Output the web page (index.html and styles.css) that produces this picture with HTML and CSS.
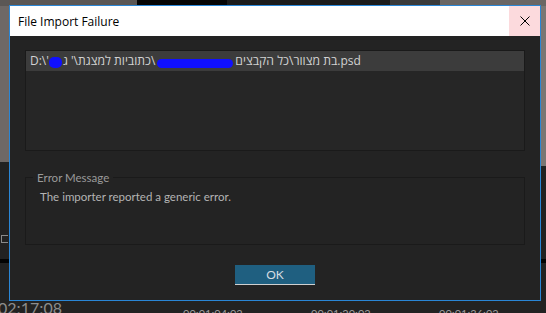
FILE: index.html
```html
<!DOCTYPE html>
<html lang="en">
<head>
  <meta charset="UTF-8" />
  <meta name="viewport" content="width=device-width, initial-scale=1.0"/>
  <title>File Import Failure</title>
  <link rel="stylesheet" href="styles.css">
</head>
<body>
  <div class="desktop">
    <!-- app behind the dialog -->
    <div class="backdrop-top">
      <div class="strip photo"></div>
      <div class="strip black"></div>
      <div class="strip dark"></div>
      <div class="strip grey"></div>
      <div class="strip photo2"></div>
    </div>
    <div class="backdrop-left"></div>
    <div class="backdrop-right"></div>
    <div class="band band-left"></div>
    <div class="band band-right"></div>
    <div class="side-icon"></div>
    <div class="backdrop-bottom">
      <span class="timecode">02;17;08</span>
      <span class="ruler">00;01;04;02</span>
      <span class="ruler">00;01;20;02</span>
      <span class="ruler">00;01;36;02</span>
    </div>

    <div class="dialog">
      <div class="titlebar">
        <span class="title">File Import Failure</span>
        <button class="close" aria-label="Close">
          <svg width="10" height="10" viewBox="0 0 10 10">
            <path d="M0.5 0.5 L9.5 9.5 M9.5 0.5 L0.5 9.5" stroke="#000" stroke-width="1" fill="none"/>
          </svg>
        </button>
      </div>
      <div class="dialog-body">
        <div class="file-list">
          <div class="file-row">
            <span>D:\'</span><span class="redact small"></span><span class="heb" dir="rtl">ג</span><span>&nbsp;'\</span><span class="heb" dir="rtl">כתוביות למצגת</span><span>\</span><span class="redact long"></span><span class="heb" dir="rtl">בת מצוור\כל הקבצים</span><span>.psd</span>
          </div>
        </div>
        <fieldset class="error-box">
          <legend>Error Message</legend>
          <div class="error-text">The importer reported a generic error.</div>
        </fieldset>
        <div class="actions">
          <button class="ok">OK</button>
        </div>
      </div>
    </div>
  </div>
</body>
</html>
```

FILE: styles.css
```css
* {
  box-sizing: border-box;
}
body, html {
  margin: 0;
  padding: 0;
  overflow: hidden;
  height: 100%;
  background: #1f1f1f;
  font-family: "Open Sans", "Noto Sans", sans-serif;
}
.desktop {
  position: relative;
  width: 546px;
  height: 313px;
  background: #222222;
}
.backdrop-top {
  display: flex;
  height: 6px;
}
.strip.photo { width: 137px; background: #5b5755; }
.strip.black { width: 90px; background: #050505; }
.strip.dark { width: 163px; background: #1b1b1b; }
.strip.grey { width: 50px; background: #3a3a3a; }
.strip.photo2 { flex: 1; background: #6a6664; }
.backdrop-left {
  position: absolute;
  left: 0;
  top: 6px;
  width: 9px;
  height: 156px;
  background: #6e6866;
}
.backdrop-right {
  position: absolute;
  right: 0;
  top: 6px;
  width: 5px;
  height: 160px;
  background: #7a7674;
}
.band {
  position: absolute;
  top: 259px;
  height: 4px;
  background: #030303;
}
.band-left { left: 0; width: 9px; }
.band-right { right: 0; width: 5px; }
.side-icon {
  position: absolute;
  left: 1px;
  top: 235px;
  width: 7px;
  height: 8px;
  border: 1px solid #8a8a8a;
  border-right: none;
}
.backdrop-bottom {
  position: absolute;
  left: 0;
  right: 0;
  top: 298px;
  height: 15px;
  display: flex;
  align-items: flex-start;
  color: #8c8c8c;
  font-family: "Lato", "Open Sans", sans-serif;
}
.timecode {
  flex-shrink: 0;
  font-size: 16px;
  line-height: 16px;
  margin-top: 2px;
  margin-left: -2px;
  width: 185px;
}
.ruler {
  flex-shrink: 0;
  font-size: 11px;
  line-height: 11px;
  margin-top: 10px;
  width: 128px;
  color: #9a9a9a;
}

.dialog {
  position: absolute;
  left: 9px;
  top: 5px;
  width: 532px;
  height: 296px;
  border: 1px solid #2a86d6;
  background: #232323;
  display: flex;
  flex-direction: column;
}
.titlebar {
  height: 30px;
  background: #ffffff;
  display: flex;
  align-items: center;
  justify-content: space-between;
}
.title {
  font-size: 12px;
  color: #000;
  padding-left: 8px;
}
.close {
  width: 31px;
  height: 30px;
  border: none;
  padding: 0;
  background: #fcdadd;
  display: flex;
  align-items: center;
  justify-content: center;
}
.dialog-body {
  flex: 1;
  padding: 14px 15px 0 15px;
}
.file-list {
  height: 101px;
  border: 1px solid #1a1a1a;
  background: #262626;
}
.file-row {
  height: 20px;
  background: #3c3c3c;
  color: #d2d2d2;
  font-size: 12px;
  line-height: 20px;
  padding-left: 4px;
  white-space: nowrap;
  display: flex;
  align-items: center;
}
.heb {
  font-size: 12.2px;
}
.redact {
  display: inline-block;
  background: #1010ff;
  height: 11px;
  border-radius: 5px;
}
.redact.small { width: 13px; margin: 3px 1px 0 0; }
.redact.long { width: 76px; height: 9px; margin: 4px 2px 0 2px; }
.error-box {
  margin: 20px 0 0 0;
  padding: 0 0 0 14px;
  height: 74px;
  border: 1px solid #1a1a1a;
  font-family: "Lato", "Open Sans", sans-serif;
}
.error-box legend {
  font-size: 11.5px;
  color: #9a9a9a;
  padding: 0 4px;
  margin-left: -7px;
}
.error-text {
  font-size: 11.5px;
  color: #b4b4b4;
  margin-top: 6px;
}
.actions {
  display: flex;
  justify-content: center;
  margin-top: 20px;
}
.ok {
  width: 80px;
  height: 20px;
  border: none;
  border-bottom: 1px solid #cfcfcf;
  background: #1f5f80;
  color: #d6dde2;
  font-family: "Lato", "Open Sans", sans-serif;
  font-size: 12px;
  padding: 0;
}
```
